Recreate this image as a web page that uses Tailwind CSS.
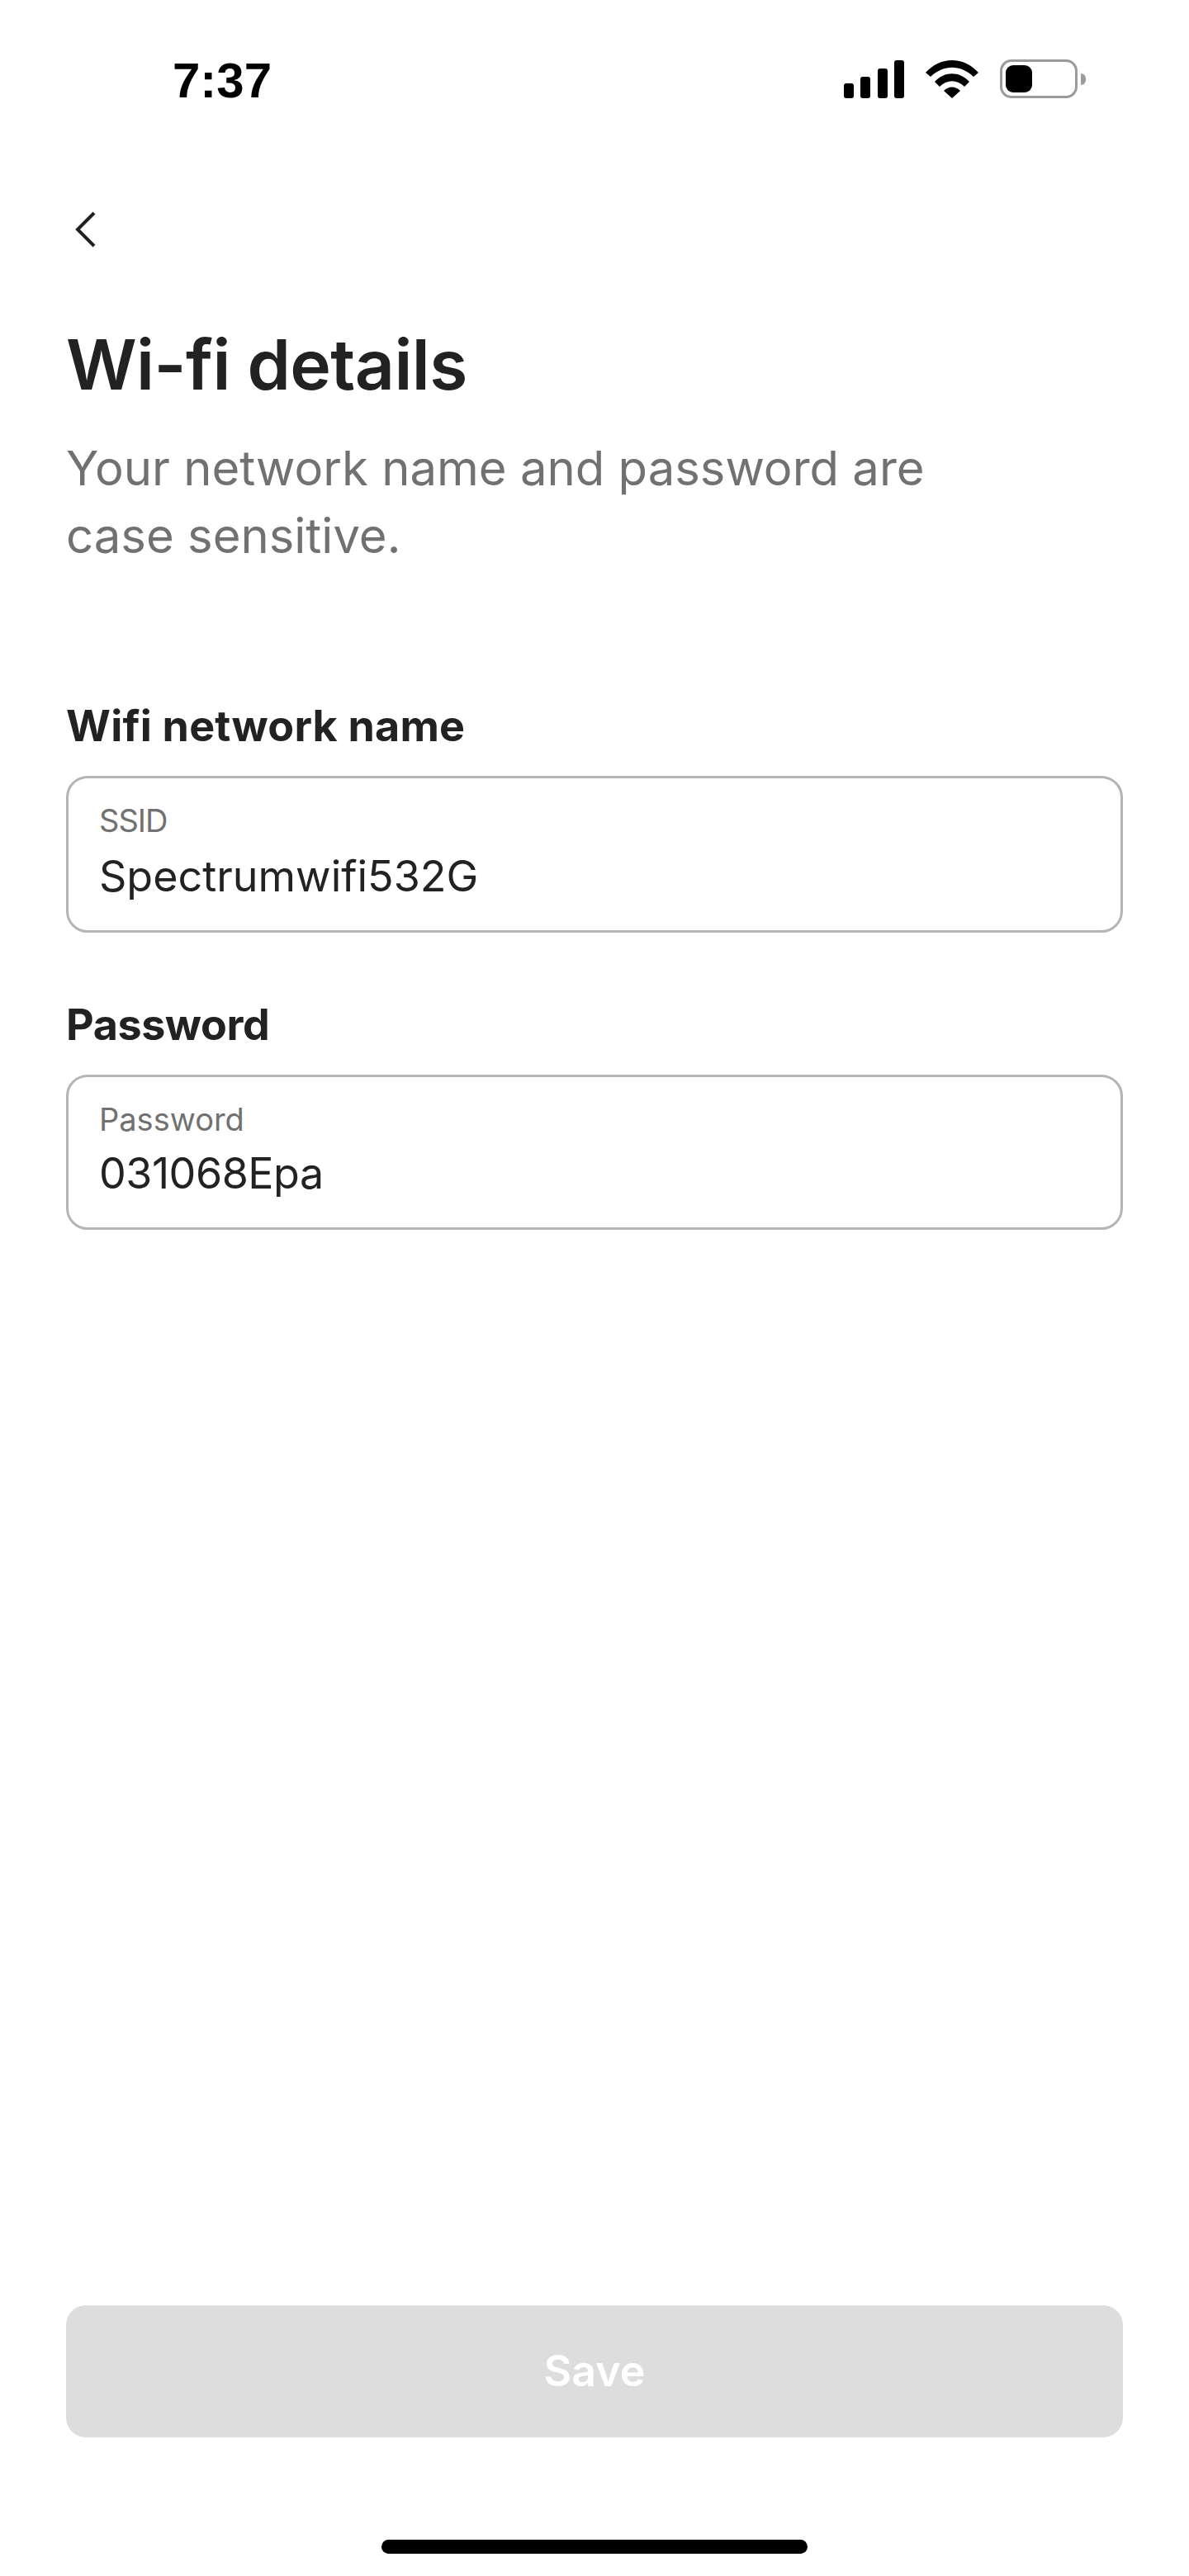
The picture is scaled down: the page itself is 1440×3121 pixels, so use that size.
<!DOCTYPE html>
<html lang="en">

<head>
    <meta charset="UTF-8">
    <meta name="viewport" content="width=device-width, initial-scale=1.0">
    <title>Wi-fi details</title>
    <script src="https://cdn.jsdelivr.net/npm/@tailwindcss/browser@4"></script>
</head>

<body class="bg-white font-['Inter',sans-serif] text-[#222222]">
    <div class="flex h-[3121px] w-[1440px] flex-col overflow-hidden">

        <!-- Status bar -->
        <header class="flex h-[120px] items-end justify-between pl-[209px] pr-[125px]">
            <span class="-mb-[8px] text-[60px] leading-[60px] font-semibold text-black font-['Liberation_Sans',sans-serif]">7:37</span>
            <div class="mb-[1px] flex items-center">
                <svg width="73" height="46" viewBox="0 0 73 46" fill="#000">
                    <rect x="0" y="28" width="12" height="18" rx="3" />
                    <rect x="20" y="20" width="12" height="26" rx="3" />
                    <rect x="41" y="10" width="12" height="36" rx="3" />
                    <rect x="61" y="0" width="12" height="46" rx="3" />
                </svg>
                <svg class="ml-[26px]" width="64" height="46" viewBox="0 0 64 46" fill="#000">
                    <path d="M0 15 C18 -5 46 -5 64 15 L58 20 C42 5 22 5 6 20 Z" />
                    <path d="M11 26 C23 13 41 13 53 26 L47 32 C38 23 26 23 17 32 Z" />
                    <path d="M22 37 C28 31 36 31 42 37 L32 46 Z" />
                </svg>
                <div class="ml-[26px] flex items-center">
                    <div class="h-[47px] w-[94px] rounded-[14px] border-[3px] border-[#9a9a9a] p-[4px]">
                        <div class="h-full w-[32px] rounded-[9px] bg-black"></div>
                    </div>
                    <div class="ml-[4px] h-[14px] w-[6px] rounded-r-full bg-[#9a9a9a]"></div>
                </div>
            </div>
        </header>

        <main class="flex-1 px-[80px]">
            <button class="mt-[136px] ml-[10px] block">
                <svg class="block" width="27" height="44" viewBox="0 0 27 44" fill="none" stroke="#222222" stroke-width="4">
                    <path d="M24 2 L4 22 L24 42" />
                </svg>
            </button>

            <h1 class="mt-[92px] text-[84px] leading-[100px] font-semibold tracking-[-0.6px]">Wi-fi details</h1>
            <p class="mt-[34px] w-[1100px] text-[58px] leading-[82px] text-[#717171]">Your network name and password are case sensitive.</p>

            <section class="mt-[160px]">
                <h2 class="text-[52px] leading-[60px] font-bold tracking-[0.2px]">Wifi network name</h2>
                <div class="mt-[30px] h-[190px] rounded-[26px] border-[3px] border-[#b5b5b5] pt-[28px] pl-[37px]">
                    <div class="text-[38px] leading-[46px] tracking-[-1px] text-[#717171]">SSID</div>
                    <div class="mt-[14px] text-[52px] leading-[62px]">Spectrumwifi532G</div>
                </div>
            </section>

            <section class="mt-[82px]">
                <h2 class="text-[52px] leading-[60px] font-bold tracking-[-0.4px]">Password</h2>
                <div class="mt-[30px] h-[188px] rounded-[26px] border-[3px] border-[#b5b5b5] pt-[28px] pl-[37px]">
                    <div class="text-[38px] leading-[46px] text-[#717171]">Password</div>
                    <div class="mt-[12px] text-[52px] leading-[62px] tracking-[-0.5px]">031068Epa</div>
                </div>
            </section>
        </main>

        <footer class="px-[80px]">
            <button class="flex h-[160px] w-full items-center justify-center rounded-[24px] bg-[#dddddd] text-[52px] font-semibold text-white">Save</button>
            <div class="mx-auto mt-[124px] mb-[27px] h-[17px] w-[516px] rounded-full bg-black"></div>
        </footer>
    </div>
</body>

</html>
